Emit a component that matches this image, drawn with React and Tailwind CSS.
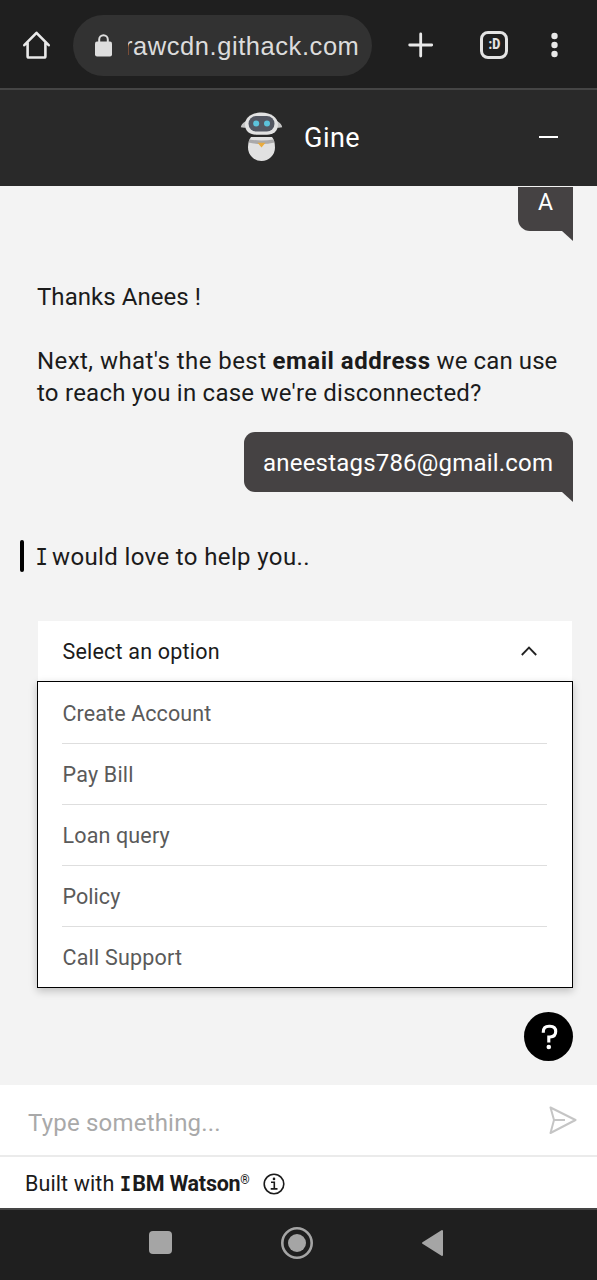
import React from "react";

const options = [
  { label: "Create Account", track: "tracking-[0.1px]" },
  { label: "Pay Bill", track: "tracking-[0.2px]" },
  { label: "Loan query", track: "tracking-[0.15px]" },
  { label: "Policy", track: "tracking-[0.05px]" },
  { label: "Call Support", track: "tracking-[0.2px]" },
];

function BrowserBar() {
  return (
    <div className="flex h-[90px] shrink-0 items-center border-b-2 border-[#454545] bg-[#1f1f1f] pt-[3px]">
      <svg className="mb-px ml-[22px] shrink-0" width="29" height="30" viewBox="0 0 29 30" fill="none" stroke="#e9e9e9" strokeWidth="2.6" strokeLinejoin="round" strokeLinecap="round">
        <path d="M2.3 15.2 14.5 2.8 26.7 15.2M5.6 13v13.2q0 1.3 1.3 1.3h15.2q1.3 0 1.3-1.3V13" />
      </svg>
      <div className="ml-[22px] flex h-[61px] w-[299px] shrink-0 items-center overflow-hidden rounded-full bg-[#323232]">
        <svg className="mb-px ml-[22px] shrink-0" width="17" height="23" viewBox="0 0 17 23">
          <path d="M4.200 9V5.5a4.300 4.300 0 0 1 8.600 0V9" fill="none" stroke="#dedede" strokeWidth="2" />
          <rect width="17" height="15" y="7.5" rx="2" fill="#dedede" />
        </svg>
        <div className="ml-[16px] w-[234px] overflow-hidden">
          <div className="-ml-[4px] whitespace-nowrap font-['Liberation_Sans',sans-serif] text-[25.500px] leading-[36px] tracking-[0.56px] text-[#dcdcdc]">rawcdn.githack.com</div>
        </div>
      </div>
      <svg className="mb-px ml-[36px] shrink-0" width="26" height="26" viewBox="0 0 26 26" stroke="#e9e9e9" strokeWidth="2.800" strokeLinecap="round">
        <path d="M12.700 2v22M1.700 13h22" />
      </svg>
      <div className="mb-px ml-[46px] flex size-[28px] shrink-0 items-center justify-center rounded-[8px] border-[3px] border-[#e3e3e3] font-[Roboto,sans-serif] text-[15.500px] font-black leading-none text-[#e3e3e3]">
        <span className="scale-x-[0.8]">:D</span>
      </div>
      <svg className="mb-px ml-[42px] shrink-0" width="8" height="28" viewBox="0 0 8 28" fill="#e9e9e9">
        <circle cx="4.500" cy="5" r="3.2" />
        <circle cx="4.500" cy="14" r="3.2" />
        <circle cx="4.500" cy="23" r="3.2" />
      </svg>
    </div>
  );
}

function Robot() {
  return (
    <svg className="mb-[2px] ml-[240px] shrink-0" width="43" height="50" viewBox="0 0 43 50">
      <path d="M6 9Q1 12 .8 15.3q2.8.8 6 .2zM37 9q5 3 5.200 6.300-2.800.8-6 .2z" fill="#c4c4c4" />
      <path d="M21.500.4C31 .4 38 5.500 38 12.500S33 22.700 27 22.700H16C10 22.700 5 19.500 5 12.500S12 .4 21.500.4z" fill="#e2e2e2" />
      <rect x="8.500" y="4" width="26" height="15.500" rx="7.700" fill="#535762" />
      <circle cx="16.200" cy="11.500" r="3" fill="#5cc3dc" />
      <circle cx="27" cy="11.500" r="3" fill="#5cc3dc" />
      <path d="M11 25h21q3 3.500 3 10.500a13.500 13.500 0 0 1-27 0Q8 28.500 11 25z" fill="#e1e1e1" />
      <path d="M9.500 27.500q12 2 24 0l1 3q-13 3-26 0z" fill="#aaa9aa" />
      <path d="M17.500 30.800h8l-4 4.700z" fill="#e9ab3d" />
    </svg>
  );
}

function Header() {
  return (
    <div className="flex h-[96px] shrink-0 items-center bg-[#292929]">
      <Robot />
      <div className="ml-[21px] font-[Roboto,sans-serif] text-[27px] leading-[36px] tracking-[0.5px] text-white">Gine</div>
      <div className="mb-[2px] ml-auto mr-[39px] h-[2px] w-[19px] bg-white" />
    </div>
  );
}

function Tail() {
  return (
    <svg className="absolute right-0 top-full" width="11" height="10" viewBox="0 0 11 10">
      <path d="M0 0h11v10z" fill="#454243" />
    </svg>
  );
}

function SelectMenu() {
  return (
    <div className="ml-[37px] mt-[49px] w-[536px] text-[21.500px] leading-[30px]">
      <div className="mx-px flex h-[60px] items-center justify-between bg-white pl-[24.500px] pr-[35px] text-[#1b1b1b]">
        <span className="mt-[2px] tracking-[0.2px]">Select an option</span>
        <svg width="16" height="10" viewBox="0 0 16 10" fill="none" stroke="#222" strokeWidth="1.800">
          <path d="M.8 9 8 1.600 15.200 9" />
        </svg>
      </div>
      <div className="border border-black bg-white pl-[24px] pr-[25px] text-[#5a5a5a] shadow-[0_3px_8px_rgba(0,0,0,0.22)]">
        {options.map((o) => (
          <div key={o.label} className="flex h-[61px] items-center border-b border-[#dedede] pl-[0.500px] pt-px first:h-[62px] first:pt-[2px] last:h-[60px] last:border-b-0">
            <span className={o.track}>{o.label}</span>
          </div>
        ))}
      </div>
    </div>
  );
}

function Chat() {
  return (
    <div className="flex h-[899px] shrink-0 flex-col bg-[#f3f3f3] pt-px text-[24px] leading-[32px] text-[#1b1b1b]">
      <div className="relative ml-auto mr-[24px] h-[44px] w-[55px] rounded-bl-[12px] bg-[#454243] text-center text-[23px] text-white">
        A
        <Tail />
      </div>
      <div className="ml-[37px] mt-[50px] whitespace-nowrap">
        <div className="tracking-[0.05px]">Thanks Anees !</div>
        <div className="mt-[32px] flex gap-[6px]">
          <span className="tracking-[0.44px]">Next, what's the best</span>
          <b className="font-bold tracking-[0.52px]">email address</b>
          <span className="tracking-[0.1px]">we can use</span>
        </div>
        <div className="tracking-[0.24px]">to reach you in case we're disconnected?</div>
      </div>
      <div className="relative ml-auto mr-[24px] mt-[23px] flex h-[60px] w-[329px] items-center rounded-t-[11px] rounded-bl-[11px] bg-[#454243] pl-[19px] pt-px text-white">
        <span className="tracking-[0.2px]">aneestags786@gmail.com</span>
        <Tail />
      </div>
      <div className="ml-[20px] mt-[48px] flex h-[32px] items-center">
        <div className="h-[32px] w-[4px] rounded-full bg-black" />
        <div className="ml-[10px] mt-[4px] flex items-baseline gap-[3px] whitespace-nowrap">
          <span className="scale-x-[0.85] font-['Liberation_Mono',monospace] text-[25px]">I</span>
          <span className="tracking-[0.37px]">would love to help you..</span>
        </div>
      </div>
      <SelectMenu />
      <div className="ml-auto mr-[24px] mt-[24px] flex size-[49px] items-center justify-center rounded-full bg-black">
        <svg width="28" height="28" viewBox="-14 -14 28 28" fill="none" stroke="white" strokeWidth="3.100">
          <path d="M-5.700-4.300V-5q0-5.700 5.700-5.700h1q5.700 0 5.700 5.300T1 0H-.2v5.400" />
          <circle cx="-.2" cy="10" r="2.300" fill="white" stroke="none" />
        </svg>
      </div>
    </div>
  );
}

export default function App() {
  return (
    <div className="flex h-[1280px] w-[597px] flex-col overflow-hidden bg-white font-[Roboto,sans-serif]">
      <BrowserBar />
      <Header />
      <Chat />
      <div className="flex h-[72px] shrink-0 items-center justify-between border-b-2 border-[#ebebeb] bg-white pl-[28px] pr-[20.500px]">
        <span className="pt-[6px] text-[24px] leading-[32px] tracking-[0.2px] text-[#a9a9a9]">Type something...</span>
        <svg width="28" height="28" viewBox="0 0 28 28" fill="none" stroke="#c5c5c5" strokeWidth="2" strokeLinejoin="round">
          <path d="M1.500 1.500 26.500 14 1.500 27 5 14z" />
          <path d="M5 14h11" />
        </svg>
      </div>
      <div className="flex h-[51px] shrink-0 items-center whitespace-nowrap bg-white pl-[25px] pt-[2px] text-[21.500px] leading-[30px] text-[#1b1b1b]">
        <span className="tracking-[0.1px]">Built with</span>
        <b className="ml-[5px] mt-px flex w-[121px] items-baseline font-bold">
          <span className="scale-x-[0.85] font-['Liberation_Mono',monospace]">I</span>
          <span className="tracking-[-0.25px]">BM Watson</span>
        </b>
        <span className="-mt-[7px] text-[12px] font-medium">®</span>
        <svg className="ml-[13px]" width="22" height="22" viewBox="0 0 22 22" fill="none" stroke="#1b1b1b" strokeWidth="1.600">
          <circle cx="11" cy="11" r="9.800" />
          <path d="M8 9.300h3.300v6.500M7.700 15.900h6.800" />
          <circle cx="11" cy="5.900" r="1.300" fill="#1b1b1b" stroke="none" />
        </svg>
      </div>
      <div className="flex h-[72px] shrink-0 items-center border-t-2 border-[#454545] bg-[#1f1f1f] pb-[5px]">
        <div className="ml-[149px] size-[23px] rounded-[4px] bg-[#a5a5a5]" />
        <svg className="ml-[109px]" width="32" height="32" viewBox="0 0 32 32">
          <circle cx="16" cy="16" r="14.700" fill="none" stroke="#a5a5a5" strokeWidth="2.600" />
          <circle cx="16" cy="16" r="9" fill="#a5a5a5" />
        </svg>
        <svg className="ml-[108px]" width="23" height="28" viewBox="0 0 23 28">
          <path d="M2 14 21 2v24z" fill="#a5a5a5" stroke="#a5a5a5" strokeWidth="2" strokeLinejoin="round" />
        </svg>
      </div>
    </div>
  );
}
